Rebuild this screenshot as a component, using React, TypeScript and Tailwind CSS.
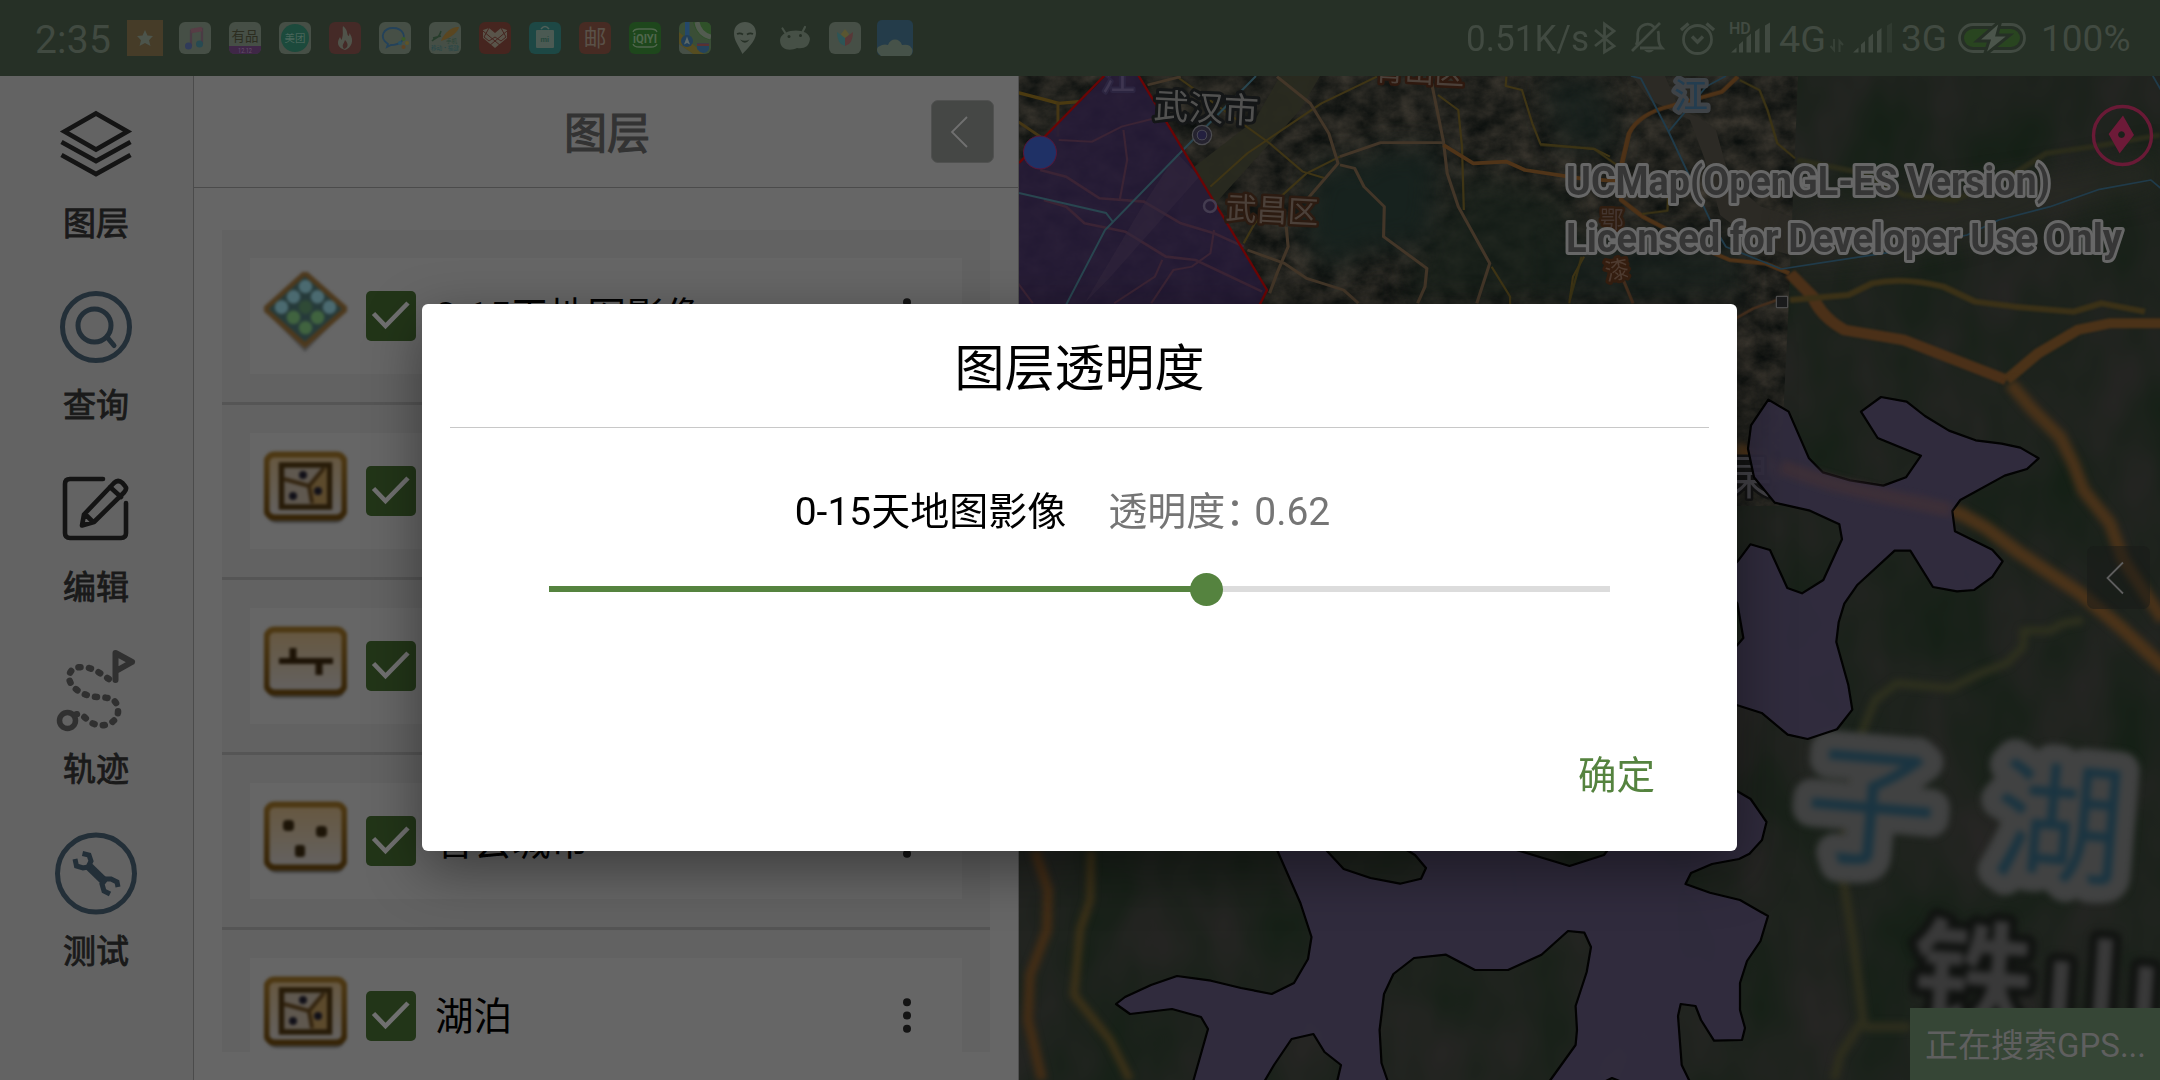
import React from "react";

const FONT = "font-['Roboto','Noto_Sans_CJK_SC',sans-serif]";

type GlyphKind = "raster" | "polygon" | "line" | "point";

const layers: { kind: GlyphKind; name: string }[] = [
  { kind: "raster", name: "0-15天地图影像" },
  { kind: "polygon", name: "" },
  { kind: "line", name: "" },
  { kind: "point", name: "省会城市" },
  { kind: "polygon", name: "湖泊" },
];

function LayerGlyph({ kind }: { kind: GlyphKind }) {
  if (kind === "raster") {
    const cells = [];
    for (let r = 0; r < 3; r++)
      for (let c = 0; c < 3; c++) {
        const x = 41.5 + (c - r) * 12;
        const y = 14.5 + (c + r) * 10.3;
        const fill = r === 1 && c === 1 ? "#2f4a36" : r + c < 3 ? "#4b6a70" : "#40633f";
        cells.push(<circle key={`${r}${c}`} cx={x} cy={y} r="6.8" fill={fill} />);
      }
    return (
      <svg className="h-[88px] w-[83px] shrink-0 blur-[1.6px]" viewBox="0 0 83 88">
        <path d="M41 6 L78 42 L41 80 L4 42Z" fill="#4a4a4a" />
        <path d="M41 1 L82 37 L41 73 L1 37Z" fill="#263a3a" stroke="#4d391d" strokeWidth="5" />
        {cells}
      </svg>
    );
  }
  return (
    <svg className="h-[88px] w-[83px] shrink-0 blur-[1.6px]" viewBox="0 0 83 88">
      <defs>
        <linearGradient id="plate" x1="0" y1="0" x2="0" y2="1">
          <stop offset="0" stopColor="#66573f" />
          <stop offset="1" stopColor="#636160" />
        </linearGradient>
        <linearGradient id="frame" x1="0" y1="0" x2="0" y2="1">
          <stop offset="0" stopColor="#4d3813" />
          <stop offset="1" stopColor="#362407" />
        </linearGradient>
      </defs>
      <rect x="3" y="12" width="78" height="64" rx="9" fill="#333" opacity="0.7" />
      <rect x="2.5" y="7.5" width="78" height="63" rx="8" fill="url(#plate)" stroke="url(#frame)" strokeWidth="6" />
      {kind === "polygon" && (
        <g>
          <rect x="17.5" y="18" width="48" height="42" fill="#5f584f" stroke="#271b08" strokeWidth="5.5" />
          <path d="M45 39 L60 21 L63 21 L63 57 L47 57Z" fill="#5c4a2c" />
          <path d="M20 32 L45 39 L60 21 M45 39 L48 56" fill="none" stroke="#33240f" strokeWidth="4" />
          <circle cx="39" cy="28" r="4" fill="#111018" />
          <circle cx="29" cy="49" r="4" fill="#111018" />
          <circle cx="54" cy="44" r="4" fill="#111018" />
        </g>
      )}
      {kind === "line" && (
        <g stroke="#1d1306">
          <path d="M15 39 H69" strokeWidth="6" />
          <path d="M29 26 V39 M55 39 V53" strokeWidth="7" />
        </g>
      )}
      {kind === "point" && (
        <g fill="#1d1508">
          <rect x="19" y="23" width="11" height="11" rx="4" />
          <rect x="52" y="29" width="11" height="11" rx="4" />
          <rect x="31" y="48" width="10" height="12" rx="3" />
        </g>
      )}
    </svg>
  );
}

function LayerRow({ kind, name }: { kind: GlyphKind; name: string }) {
  return (
    <div className="h-[175px] shrink-0 border-b-[3px] border-[#555] pt-7 pr-7 pb-7 pl-7">
      <div className="flex h-[116px] items-center bg-[#666] pl-3.5">
        <LayerGlyph kind={kind} />
        <div className="ml-[19px] flex size-[50px] shrink-0 items-center justify-center rounded-[5px] bg-[#223518]">
          <svg className="size-[50px]" viewBox="0 0 50 50">
            <path d="M7.5 22.5 L19.5 35 L42 12" fill="none" stroke="#707070" strokeWidth="4.6" />
          </svg>
        </div>
        <span className="ml-[19px] flex-1 pt-0.5 text-[38.500px] leading-[44px] whitespace-nowrap text-black">{name}</span>
        <svg className="mr-[50px] h-9 w-2.5" viewBox="0 0 10 36">
          <circle cx="5" cy="4.2" r="4" fill="#141414" />
          <circle cx="5" cy="17.5" r="4" fill="#141414" />
          <circle cx="5" cy="30.8" r="4" fill="#141414" />
        </svg>
      </div>
    </div>
  );
}

function SideItem({ label, children }: { label: string; children: React.ReactNode }) {
  return (
    <div className="flex h-[182px] flex-col items-center">
      <svg className="h-[90px] w-[90px]" viewBox="0 0 90 90" fill="none">
        {children}
      </svg>
      <span className="mt-[17px] text-[33px] leading-[36px] text-[#1a1a1a] [-webkit-text-stroke:0.9px_#1a1a1a]">
        {label}
      </span>
    </div>
  );
}

function Sidebar() {
  return (
    <nav className="flex w-[194px] shrink-0 flex-col border-r border-[#4b4b4b] bg-[#636363] pt-[23px] pr-px">
      <SideItem label="图层">
        <g stroke="#141414" strokeWidth="4.6">
          <path d="M45 14.5 L76.500 32.5 L45 50.500 L13.500 32.5Z" />
          <path d="M10.500 43 L45 62 L79.500 43" />
          <path d="M10.500 56 L45 75 L79.500 56" />
        </g>
      </SideItem>
      <SideItem label="查询">
        <g stroke="#232f38" strokeWidth="5">
          <circle cx="45" cy="46" r="33.5" />
          <circle cx="43.5" cy="44.5" r="16.5" />
          <path d="M56 56 L63 64.5" strokeLinecap="round" />
        </g>
      </SideItem>
      <SideItem label="编辑">
        <g stroke="#141414" strokeWidth="4.6" strokeLinecap="round" strokeLinejoin="round">
          <path d="M52 16 H19 Q14 16 14 21 V70 Q14 75 19 75 H70 Q75 75 75 70 V40" />
          <path d="M33 51.500 L63 20 Q67 16 71.500 20 L74 23 Q76.500 26 73 29.500 L43 59 L31 62.500Z M59 24 L70 34 M34 51 L42 59" />
        </g>
      </SideItem>
      <SideItem label="轨迹">
        <circle cx="16.500" cy="75.500" r="8" stroke="#303030" strokeWidth="5.5" />
        <path
          d="M24 70 C31 66 34 75 42 78.500 C55 84 68 76 67 65 C66 54 60 52.500 46 52 C30 51 18 41 18 32 C19 22 28 21 38 23 C48 26 54 32 61 36"
          stroke="#303030"
          strokeWidth="6.5"
          strokeLinecap="round"
          strokeDasharray="2 8.400"
        />
        <path d="M64.500 35 V8 L81 17 L65 26" stroke="#303030" strokeWidth="6" strokeLinejoin="round" strokeLinecap="round" />
      </SideItem>
      <SideItem label="测试">
        <circle cx="45" cy="46.500" r="38.500" stroke="#232f38" strokeWidth="5" />
        <g stroke="#232f38">
          <path d="M37 38.500 L54 55" strokeWidth="8.500" />
          <path d="M31.500 26.500 L38 28 L40 34 L37 40 L32 41 L25.500 39 L24 32" strokeWidth="5" />
          <path d="M59 67 L53 64 L51 57 L55 52 L60 52 L66 55 L67 60" strokeWidth="5" />
        </g>
      </SideItem>
    </nav>
  );
}

function LayerPanel() {
  return (
    <section className="flex w-[825px] shrink-0 flex-col border-r border-[#4e4e4e] bg-[#666]">
      <header className="flex h-28 shrink-0 items-center border-b border-[#4b4b4b] pr-6">
        <h2 className="flex-1 pt-1.5 pl-[89px] text-center text-[43px] leading-none text-[#333] [-webkit-text-stroke:1.2px_#333]">
          图层
        </h2>
        <div className="flex h-[63px] w-[63px] items-center justify-center rounded-[7px] border border-[#505150] bg-[#454745]">
          <svg className="mr-1.5 h-9 w-6" viewBox="0 0 24 36">
            <path d="M19 3 L4 18 L19 33" fill="none" stroke="#707070" strokeWidth="1.8" />
          </svg>
        </div>
      </header>
      <div className="mt-[42px] mb-7 ml-7 flex min-h-0 w-[768px] flex-1 flex-col overflow-hidden bg-[#626262]">
        {layers.map((l, i) => (
          <LayerRow key={i} kind={l.kind} name={l.name} />
        ))}
      </div>
    </section>
  );
}

function MapView() {
  const lake = "#322d40";
  return (
    <section className="relative min-w-0 flex-1 overflow-hidden bg-[#1c231d]">
      <svg className="block h-[1004px] w-[1141px]" viewBox="1019 76 1141 1004">
        <defs>
          <filter id="city" x="0" y="0" width="1" height="1" colorInterpolationFilters="sRGB">
            <feTurbulence type="fractalNoise" baseFrequency="0.045 0.06" numOctaves="5" seed="4" />
            <feColorMatrix values="0.24 0 0 0 0.015  0.2 0 0 0 0.035  0.17 0 0 0 0.032  0 0 0 0 1" />
          </filter>
          <filter id="rural" x="0" y="0" width="1" height="1" colorInterpolationFilters="sRGB">
            <feTurbulence type="fractalNoise" baseFrequency="0.014 0.009" numOctaves="3" seed="9" />
            <feColorMatrix values="0.1 0 0 0 0.065  0.03 0 0 0 0.12  0.08 0 0 0 0.072  0 0 0 0 1" />
          </filter>
          <filter id="soft" x="-20%" y="-20%" width="140%" height="140%" colorInterpolationFilters="sRGB">
            <feGaussianBlur stdDeviation="3" />
          </filter>
          <filter id="haze" x="-50%" y="-50%" width="200%" height="200%" colorInterpolationFilters="sRGB">
            <feGaussianBlur stdDeviation="14" />
          </filter>
          <clipPath id="west">
            <path d="M1019 76 H1798 L1788 320 L1760 870 L1019 870Z" />
          </clipPath>
        </defs>
        <rect x="1019" y="76" width="1141" height="1004" filter="url(#rural)" />
        <g clipPath="url(#west)">
          <rect x="1019" y="76" width="790" height="430" filter="url(#city)" />
          <g filter="url(#haze)">
            <path d="M1320 160 L1375 165 L1380 240 L1330 270 L1300 230Z" fill="#17221e" />
            <path d="M1370 150 L1440 150 L1430 240 L1375 250Z" fill="#17221e" />
            <path d="M1540 240 L1740 240 L1740 300 L1540 300Z" fill="#18211d" opacity="0.8" />
            <path d="M1470 170 L1570 200 L1560 300 L1400 300Z" fill="#172019" opacity="0.75" />
            <path d="M1540 76 L1600 76 L1620 150 L1560 150Z" fill="#17211d" opacity="0.8" />
          </g>
          <path d="M1280 76 L1255 120 L1190 170 L1180 215 L1205 215 L1250 165 L1300 110 L1320 76Z" fill="#292a20" opacity="0.95" />
          <path
            d="M1632 76 L1665 76 L1680 110 L1700 118 L1716 130 L1730 180 L1760 206 L1795 218 L1790 255 L1760 246 L1720 215 L1705 160 L1690 120 L1650 100Z"
            fill="#2c2a25"
          />
        </g>
        <path d="M1790 215 C1900 190 2030 190 2160 150 V190 C2040 210 1930 260 1790 262Z" fill="#2a2a25" opacity="0.8" filter="url(#haze)" />

        {/* Local roads around the city centre */}
        <g transform="translate(1018 70) scale(0.37 0.3333)" fill="none" strokeLinejoin="round">
          <g stroke="#3f3515" strokeWidth="6">
            <path d="M0 68 L60 85 L110 100 L165 95" stroke="#4b3a10" strokeWidth="10" />
            <path d="M0 155 L60 200 M108 95 V200" stroke="#453614" strokeWidth="8" />
            <path d="M430 20 L680 220 L770 305 L830 325" />
            <path d="M970 20 L820 100 L620 250 L520 350" />
            <path d="M870 260 L780 310 L700 390 L640 460 L610 520" />
            <path d="M1135 75 L1190 120 L1200 230 L1205 420" />
            <path d="M1320 20 L1318 48 L1362 60 L1390 160 L1412 222 L1560 238 L1600 260" />
            <path d="M1530 560 L1500 620 L1490 700 M1280 590 L1330 680 V720" />
          </g>
          <g stroke="#433628" strokeWidth="8.500">
            <path d="M350 45 L440 20 M700 20 L790 100 L840 190 L865 280 L780 390 M870 260 L980 218 L1150 218" />
            <path d="M1118 40 L1150 215 L1160 310 L1190 410 L1275 580 L1240 700" />
            <path d="M870 285 L910 295 L935 350 L990 410 L988 500 L1105 595 L1100 650 L1080 700" />
            <path d="M725 470 L730 530 L700 610 L680 670 M620 540 L720 580 L780 625 L880 660 L920 700" />
          </g>
          <path d="M1150 225 L1230 280 L1320 275 L1370 300 L1520 325 L1700 340" stroke="#503418" strokeWidth="11" />
        </g>

        {/* Ring road and highways */}
        <g transform="translate(1540 70) scale(0.3954 0.3333)" fill="none" strokeLinejoin="round">
          <path
            d="M500 20 L460 65 L400 85 L330 108 Q250 130 225 190 L205 290 V390 L260 440 L420 540 L480 570 L570 580 L630 610"
            stroke="#4e3217"
            strokeWidth="12"
          />
          <path d="M200 600 L235 700 M495 745 L540 715 L600 690" stroke="#452f1e" strokeWidth="8" />
          <path
            d="M505 30 L555 60 L575 120 L600 220 L645 265 M0 225 L135 235 L200 290 M105 560 L75 690 M325 350 L322 422 L258 432"
            stroke="#3c3415"
            strokeWidth="6"
          />
          <g filter="url(#soft)">
            <path d="M632 610 L690 680 Q710 740 770 780 L920 810 L1050 870 L1180 930" stroke="#4b3018" strokeWidth="32" />
            <path d="M1180 930 L1260 850 L1360 780 L1440 760 H1580" stroke="#4b3218" strokeWidth="30" />
            <path
              d="M632 690 L780 675 L840 640 Q920 620 1020 650 L1100 695 L1200 710 L1350 725 L1420 700 L1530 725"
              stroke="#3b3117"
              strokeWidth="18"
            />
            <path d="M650 270 L820 310 L920 375 L1050 390 L1200 310 L1280 250 L1400 230 L1568 195" stroke="#2b2c1b" strokeWidth="16" />
          </g>
          <g stroke="#203b4a" strokeWidth="5">
            <path d="M230 18 L255 25 L325 185 L430 450 L470 530 L610 597 L880 548 L1080 495 L1160 450 L1290 410 L1415 358 L1545 330 L1580 365" />
            <path d="M470 18 L420 50 L325 185 M1550 18 L1580 80" />
          </g>
        </g>
        <g transform="translate(1720 340) scale(0.3333)" fill="none" strokeLinejoin="round">
          <g className="blur-[9px]">
            <path d="M870 130 L930 200 L1020 290 L1060 370 L1090 450 L1170 550 L1210 660 L1330 840" stroke="#493219" strokeWidth="38" />
            <path
              d="M50 325 L180 390 L330 440 L480 470 L610 490 L720 520 L800 565 L900 640 L1080 760 L1200 860 L1340 990"
              stroke="#4b3319"
              strokeWidth="40"
            />
            <path
              d="M1090 840 L1030 850 L990 872 H910 V920 L860 970 L780 1000 L690 1045 L530 1030 L465 1080 L425 1180 V1260"
              stroke="#2e301e"
              strokeWidth="24"
            />
          </g>
        </g>
        <g filter="url(#soft)" fill="none">
          <path d="M1861 740 L1840 860 L1853 940 L1863 1020 L1840 1055 L1834 1080 M1863 1027 H1910" stroke="#2e2e1d" strokeWidth="9" />
          <path d="M1035 851 L1048 890 L1047 930 L1030 975 L1028 1020 L1042 1080" stroke="#432d16" strokeWidth="10" />
          <path d="M1091 851 L1090 900 L1080 930 L1074 995 L1110 1040 L1130 1080" stroke="#3d3218" strokeWidth="8" />
        </g>

        {/* Highlighted administrative area */}
        <path d="M1019 163 L1109 73 H1138 L1267 290 L1240 345 H1019Z" fill="#271b39" fillOpacity="0.85" />
        <g transform="translate(1018 70) scale(0.37 0.3333)" fill="none" stroke="#3b2435" strokeWidth="8">
          <path d="M60 300 L130 320 L220 385 L340 395 L440 460 L530 490 L610 530" />
          <path d="M70 390 L130 410 L180 460 L290 485 L400 560 L480 570 L660 665" />
          <path
            d="M530 480 L520 550 L470 590 L420 600 L360 700 M390 570 L370 620 L260 700 M285 180 L295 270 L275 390 M110 210 L200 215 L280 170 L370 145 M0 640 L40 700"
            strokeWidth="6"
          />
          <path d="M430 250 L490 320 L250 620 L180 700 L330 420Z" fill="#33273d" stroke="none" opacity="0.5" />
        </g>
        <path d="M1019 193 L1106 213 L1113 222 L1182 151 L1256 76 M1113 222 L1105 230 L1066 305" fill="none" stroke="#294650" strokeWidth="2" />
        <path d="M1019 163 L1107 73 M1137 73 L1267 290 L1240 345" fill="none" stroke="#6b0505" strokeWidth="2.4" />
        <circle cx="1040" cy="152.500" r="16.500" fill="#1f3166" stroke="#5b1636" strokeWidth="1" />

        {/* Place names */}
        <g className="font-['Noto_Sans_CJK_SC',sans-serif]" paintOrder="stroke" strokeLinejoin="round">
          <text x="1101" y="90" fontSize="34" fill="#3e3650" stroke="#2c2540" strokeWidth="4">江</text>
          <text x="1153" y="118" fontSize="35" fill="#515150" stroke="#141617" strokeWidth="6" transform="rotate(3 1153 118)">武汉市</text>
          <circle cx="1202" cy="135" r="9" fill="#25232f" stroke="#4c4c50" strokeWidth="2.500" />
          <circle cx="1202" cy="135" r="4.500" fill="#23203f" stroke="#55555d" strokeWidth="1.500" />
          <circle cx="1210" cy="206" r="6" fill="none" stroke="#443c50" strokeWidth="2.500" />
          <text x="1225" y="219" fontSize="31" fill="#4b4039" stroke="#2c1b11" strokeWidth="5" transform="rotate(3 1225 219)">武昌区</text>
          <text x="1374" y="80" fontSize="30" fill="#4b4039" stroke="#2f190f" strokeWidth="5" transform="rotate(3 1374 80)">青山区</text>
          <text x="1674" y="108" fontSize="34" fill="#233d50" stroke="#3f4347" strokeWidth="8">江</text>
          <text x="1600" y="228" fontSize="24" fill="#43352f" stroke="#301d10" strokeWidth="5">鄂</text>
          <text x="1607" y="281" fontSize="24" fill="#4f3c31" stroke="#351e10" strokeWidth="6" transform="rotate(-12 1607 281)">漆</text>
          <text x="1726" y="494" fontSize="46" fill="#424146" stroke="#131313" strokeWidth="5">杲</text>
          <rect x="1777" y="297" width="10" height="10" fill="#1b1c1d" stroke="#4d4d4d" strokeWidth="2.500" />
        </g>
        <g className="font-['Noto_Sans_CJK_SC',sans-serif]" strokeLinejoin="round" paintOrder="stroke" filter="url(#soft)">
          <g transform="rotate(5 1800 850)" fontSize="132" fill="#1a3441" stroke="#414242" strokeWidth="38">
            <text x="1801" y="849">子</text>
            <text x="1990" y="849">湖</text>
          </g>
          <g transform="rotate(4 1910 1030)" fontSize="122" fontWeight="700" fill="#393939" stroke="#101210" strokeWidth="16">
            <text x="1908" y="1018">铁</text>
            <text x="2038" y="1028">山</text>
          </g>
        </g>

        {/* Lakes */}
        <g stroke="#020202" strokeWidth="2.2" strokeLinejoin="round" fill={lake} fillOpacity="0.92">
          <path
            vectorEffect="non-scaling-stroke"
            transform="translate(1720 340) scale(0.3333)"
            d="M0 720 L53 664 L91 613 L150 630 L202 744 L246 760 L310 720 L366 598 L358 553 L270 512 L164 488 L102 412 L84 326 L93 256 L145 179 L206 215 L267 355 L308 397 L390 421 L490 437 L558 412 L603 347 L473 294 L423 215 L483 171 L560 185 L615 228 L687 272 L767 301 L845 311 L901 323 L956 355 L921 387 L854 407 L721 480 L697 513 L705 574 L817 629 L848 664 L817 711 L763 750 L711 754 L639 741 L571 632 H524 L411 736 L373 791 L356 847 L349 906 L385 1035 L397 1109 L351 1168 L263 1197 L203 1184 L125 1119 L52 1096 L0 1080 L0 970 L52 915 L70 894 L52 790Z"
          />
          <path
            fillRule="evenodd"
            d="M1270 830 L1277.500 851 L1300.400 903 L1311.500 937 L1308 959 L1294 983 L1271.700 994 L1241 988 L1211 980.700 L1177 976 L1151 985 L1125 997 L1116 1004 L1130 1014 L1172 1009 L1201 1017 L1208 1029 L1193 1082 H1264 L1274 1065 L1291.600 1039 L1313.400 1034 L1324.500 1052 L1341 1065 L1337 1082 H1388 L1381.500 1063 L1379.600 1030 L1384 994 L1393.400 974 L1414 958 L1446 954.700 L1475 970 H1508 L1541.500 954.700 L1568 931 L1584.400 932.700 L1591 947 L1586.700 972 L1575.600 1006 L1577 1030 L1575.600 1045 L1549 1082 H1690 L1681.700 1065 L1678 1016 L1680.700 1004 L1695.500 1006 L1701 1020 L1714 1040.700 L1742 1040 L1745 1028 L1740 1010 V983 L1747 961 L1760.500 941 L1768 916 L1740 900 L1710 892.700 L1685.500 884 L1691 873 L1712 864 L1739 859 L1749.500 853.700 L1762 840 L1766.500 822 L1750.600 799 L1737 791 L1700 780 V830Z M1320 840 L1327 851 L1343.700 869 L1370.500 878 L1400 883.700 L1421 878.700 L1426 868 L1415 855 L1400 846Z M1500 845 L1569.500 866 L1604 855 L1615 840Z"
          />
          <path d="M1604 1082 L1612 1078 L1622 1082" fill="#1a201c" />
        </g>
        <path d="M1782 466 C1830 485 1880 495 1950 510" stroke="#403037" strokeWidth="14" opacity="0.75" fill="none" filter="url(#soft)" />

        {/* Licence watermark */}
        <g
          className="font-['Roboto',sans-serif]"
          fontSize="40"
          fontWeight="700"
          fill="#363636"
          stroke="#676767"
          strokeWidth="6"
          paintOrder="stroke"
          strokeLinejoin="round"
        >
          <text x="1566" y="195" textLength="484" lengthAdjust="spacingAndGlyphs">UCMap(OpenGL-ES Version)</text>
          <text x="1566" y="252" textLength="556" lengthAdjust="spacingAndGlyphs">Licensed for Developer Use Only</text>
        </g>

        <circle cx="2122.500" cy="135.500" r="29" fill="none" stroke="#691a36" strokeWidth="3.400" />
        <path
          fillRule="evenodd"
          fill="#6d1a38"
          d="M2123 115.500 L2134 135 L2119.600 153.500 L2108.600 134Z M2121.500 131.200 a3.400 3.400 0 1 0 0.010 0Z"
        />
      </svg>
      <div className="absolute top-[470px] right-2.5 flex size-[63px] items-center justify-center rounded-[7px] bg-[#171917]/50">
        <svg className="mr-1.5 h-9 w-6" viewBox="0 0 24 36">
          <path d="M19 2.500 L3.500 18 L19 33.500" fill="none" stroke="#5e5e5e" strokeWidth="1.8" />
        </svg>
      </div>
      <div className="absolute right-0 bottom-0 flex h-[72px] w-[250px] items-center bg-[#364636] pt-0.5 pl-[15px] text-[33px] leading-none whitespace-nowrap text-[#5f5f5f]">
        正在搜索GPS...
      </div>
    </section>
  );
}

function AppTile({ fill, children }: { fill: string; children?: React.ReactNode }) {
  return (
    <svg className="size-8 shrink-0" viewBox="0 0 32 32">
      <rect width="32" height="32" rx="6" fill={fill} />
      {children}
    </svg>
  );
}

function SignalBars({ last }: { last: string }) {
  return (
    <g fill="#414a41">
      <path d="M0 30 L5.500 25 V30Z M8 30 V22 L12 18.500 V30Z M15.500 30 V15 L20 11 V30Z M24 30 V9 L28.500 5.500 V30Z" />
      <path d="M34 30 V3 L39 0 V30Z" fill={last} />
    </g>
  );
}

function StatusBar() {
  const cjk = "font-['Noto_Sans_CJK_SC',sans-serif]";
  return (
    <header className="flex h-[76px] shrink-0 items-center bg-[#263026] pl-[35px] text-[#414a41]">
      <span className="w-[92px] pt-1 text-[39px] leading-[44px] tracking-[0.2px]">2:35</span>
      <div className="flex items-center gap-[18px]">
        <svg className="-mr-0.5 size-9 shrink-0" viewBox="0 0 36 36">
          <rect width="36" height="36" fill="#463c28" />
          <path d="M18 10 L20.500 15.500 L26 16 L22 20.300 L23.500 26 L18 23 L12.500 26 L14 20.300 L10 16 L15.500 15.500Z" fill="#4c544b" />
        </svg>
        <AppTile fill="#464f46">
          <path d="M12 24 V9 L23 7 V22" fill="none" stroke="#4a3b44" strokeWidth="2.200" />
          <path d="M12 9 L23 7" stroke="#573d45" strokeWidth="4.500" />
          <circle cx="9.500" cy="24" r="3.500" fill="#303b5a" />
          <circle cx="20.500" cy="22" r="3.500" fill="#274a52" />
        </AppTile>
        <AppTile fill="#464f46">
          <text x="2.500" y="18.500" fontSize="13.500" className={cjk} fill="#2c2d20">有品</text>
          <path d="M0 24 H32 V26 Q32 32 26 32 H6 Q0 32 0 26Z" fill="#3f2747" />
          <text x="9" y="31" fontSize="8" textLength="14" lengthAdjust="spacingAndGlyphs" fill="#66506c">12.12</text>
        </AppTile>
        <AppTile fill="#464f46">
          <circle cx="16" cy="16" r="14" fill="#1c4a3c" />
          <text x="5.500" y="20" fontSize="10.500" className={cjk} fill="#4a665b">美团</text>
        </AppTile>
        <AppTile fill="#452a27">
          <path
            d="M14 4 C20 9 17 13 20 14 L20.500 11 C26 19 22 26 16 28 C9 26 7 21 11 15 L12.500 18 C15 12 13 8 14 4Z M15 27 C12 23 15 22 16 18 C20 22 19 26 15 27Z"
            fill="#50534a"
            fillRule="evenodd"
          />
        </AppTile>
        <AppTile fill="#464f46">
          <path d="M8 25 L9 22 C-1 15 5 6 14 6 C24 6 28 15 22 20 Q18 23 12 23Z" fill="none" stroke="#24425a" strokeWidth="1.800" />
          <circle cx="24.500" cy="17" r="2" fill="#3a5a28" />
          <circle cx="21" cy="21" r="2" fill="#275063" />
          <circle cx="28" cy="21" r="2" fill="#5e5428" />
          <circle cx="24.500" cy="25" r="2" fill="#5e4324" />
        </AppTile>
        <AppTile fill="#464f46">
          <path d="M12 19 C15 10 24 4 30 5 C29 10 22 16 12 19Z" fill="#5a4620" />
          <path d="M3 19 C7 15 10 17 12 9 M4 16 L12 14" fill="none" stroke="#273d2c" strokeWidth="1.500" />
          <text x="17" y="21" fontSize="5.500" className={cjk} fill="#2a4436">手机</text>
          <text x="2" y="28" fontSize="5.600" className={cjk} fill="#244648">移动·福建</text>
        </AppTile>
        <AppTile fill="#46251f">
          <path d="M4 8 L10 6 L16 11 L22 6 L28 8 L28 16 L16 26 L4 16Z" fill="#59544a" />
          <path d="M4 9 L22 24 M28 9 L10 24 M10 6 L5 15 L10 19 M22 6 L27 15 L22 19 M10 19 L16 15 L22 19" stroke="#46251f" fill="none" />
        </AppTile>
        <AppTile fill="#1d4845">
          <path d="M12 7 Q16 2 20 7" stroke="#506059" fill="none" strokeWidth="1.500" />
          <rect x="7" y="8" width="18" height="18" rx="1" fill="#4b5a53" />
          <text x="11.500" y="20" fontSize="7.500" fontWeight="700" fill="#26473c">mi</text>
        </AppTile>
        <AppTile fill="#472b23">
          <text x="4.500" y="24" fontSize="23" className={cjk} fill="#5a5148">邮</text>
        </AppTile>
        <AppTile fill="#1e471c">
          <path
            d="M4 10 Q5 7 10 7 H22 Q27 7 28 10 M4 22 Q5 25 10 25 H22 Q27 25 28 22"
            fill="none"
            stroke="#50664d"
            strokeWidth="1.300"
          />
          <text x="4" y="20.500" fontSize="12.500" fontWeight="700" textLength="24" lengthAdjust="spacingAndGlyphs" fill="#50664d">
            iQIYI
          </text>
        </AppTile>
        <AppTile fill="#3a4e36">
          <path d="M14 0 H26 Q32 0 32 6 V18 Q18 16 14 0Z" fill="#2f5129" />
          <path d="M18 0 Q20 12 32 15" stroke="#525b50" strokeWidth="5" fill="none" />
          <path d="M0 10 L25 32 H14 L0 22Z" fill="#564d20" />
          <path d="M0 22 L14 32 H6 Q0 32 0 26Z" fill="#464f46" />
          <rect x="6" y="0" width="4.500" height="14" fill="#24486a" />
          <circle cx="8" cy="19" r="6" fill="#223f58" />
          <path d="M8 14.500 L11 22.500 L8 21 L5 22.500Z" fill="#5b6868" />
          <path d="M18 21 H30 V27 Q28 31 24 31 Q20 30 18 27Z" fill="#24435c" />
          <rect x="18" y="21.500" width="12" height="2.500" fill="#5a3131" />
        </AppTile>
        <svg className="size-8 shrink-0" viewBox="0 0 32 32">
          <path d="M13.500 32 C10 24 5 19 5 11.500 C5 4 10 0 16 0 C22 0 27 4 27 11.500 C27 19 17 28 13.500 32Z" fill="#4d564d" />
          <path d="M8 12 Q11 10.500 14 12.500 M18 12.500 Q21 10.500 24 12" stroke="#263026" strokeWidth="1.700" fill="none" />
          <path d="M11 17.500 Q16 20 20.500 17.500 Q16 24 11 17.500Z" fill="#263026" />
        </svg>
        <svg className="size-8 shrink-0" viewBox="0 0 32 32">
          <path d="M3.500 6.500 L7 12 M26 5 L23.500 10" stroke="#465046" strokeWidth="2.200" strokeLinecap="round" />
          <path d="M1 18 C2 6 30 5 31 17 C30 25 25 27 18 26 C12 29 1 29 1 18Z" fill="#465046" />
          <circle cx="10" cy="14.500" r="1.500" fill="#263026" />
          <circle cx="21.500" cy="13.500" r="1.500" fill="#263026" />
        </svg>
        <AppTile fill="#464f46">
          <path d="M16 7 L20 12 L16 22 L12 12Z" fill="#5a5631" />
          <path d="M8 10 L16 16 V24 Q8 22 8 10Z" fill="#2d5557" />
          <path d="M24 10 L16 16 V24 Q24 22 24 10Z" fill="#583838" />
        </AppTile>
        <svg className="-ml-0.5 size-9 shrink-0" viewBox="0 0 36 36">
          <rect width="36" height="36" rx="5" fill="#243c4a" />
          <path d="M5 25 Q8 24 11 25 Q13 19.500 18 19.500 Q23 19.500 25 25 Q30 24 33 26 Q38 31 33 36 H4 Q-2 31 1 27Z" fill="#465249" />
        </svg>
      </div>

      <div className="ml-auto flex items-center pr-7">
        <span className="w-[130px] pt-0.5 text-[37px] leading-[44px] whitespace-nowrap">
          <span className="inline-block origin-left scale-x-[0.95]">0.51K/s</span>
        </span>
        <svg className="-ml-0.5 h-[36px] w-[255px] shrink-0 overflow-visible" viewBox="0 0 255 36" fill="none" stroke="#414a41" strokeWidth="2.800">
          <path d="M1 10 L20 26 L10.500 32 V4 L20 11 L1 26" />
          <path d="M42 25 C45 21 43 16 44 12 C46 4 55 2 60 7 M64 11 C66 16 62 22 68 28 H46 M66 3 L38 31" />
          <path d="M50 30 H60 Q55 35 50 30Z" fill="#414a41" stroke="none" />
          <circle cx="103.500" cy="19.500" r="14" />
          <path d="M98 16.500 L103.500 22 L109 16.500 M87 10 L94.500 3.500 M120 10 L112.500 3.500" strokeWidth="3.400" />
          <text x="135" y="14" fontSize="16" fontWeight="600" fill="#414a41" stroke="none">HD</text>
          <g transform="translate(137 2.500)" stroke="none">
            <SignalBars last="#414a41" />
          </g>
          <text x="185" y="32" fontSize="37" fill="#414a41" stroke="none" textLength="47" lengthAdjust="spacingAndGlyphs">4G</text>
          <path d="M240 19 V30 L236.500 26 M245.500 32 V21 L249 25" strokeWidth="2" stroke="#364036" />
        </svg>
        <svg className="ml-1 h-[36px] w-[41px]" viewBox="0 0 41 36">
          <g transform="translate(0 2.500)">
            <SignalBars last="#303a30" />
          </g>
        </svg>
        <span className="ml-[7px] w-[57px] pt-0.5 text-[37px] leading-[44px]">3G</span>
        <svg className="h-[30px] w-[68px]" viewBox="0 0 68 30">
          <rect x="1.500" y="1.500" width="65" height="27" rx="13.500" fill="none" stroke="#414a41" strokeWidth="2.800" />
          <rect x="6" y="6" width="56" height="18" rx="9" fill="#294520" />
          <path d="M43 -3 L19 18 H31 L26 33 L52 12 H39Z" fill="#4b554b" stroke="#263026" strokeWidth="3" />
        </svg>
        <span className="ml-[15px] w-[91px] pt-0.5 text-[37px] leading-[44px] whitespace-nowrap">100%</span>
      </div>
    </header>
  );
}

function OpacityDialog() {
  const value = 0.62;
  return (
    <div className="absolute inset-x-0 top-[304px] flex justify-center pr-px">
      <div className="flex h-[547px] w-[1315px] flex-col rounded-[6px] bg-white px-7 shadow-[0_18px_56px_rgba(0,0,0,0.42)]">
        <h1 className="flex h-[124px] items-center justify-center border-b border-[#c8c8c8] pt-1.5 text-[50px] leading-[60px] text-black">
          图层透明度
        </h1>
        <div className="mt-[62px] flex justify-center gap-[42px] pr-[34px] text-[39px] leading-[44px]">
          <span className="text-black">0-15天地图影像</span>
          <span className="flex text-[#757575]">
            透明度
            <span className="w-[29px]">：</span>
            {value}
          </span>
        </div>
        <div className="mx-auto mt-[35px] flex h-[40px] w-[1061px] items-center">
          <div className="h-[6px] bg-[#55833f]" style={{ width: `${value * 100}%` }} />
          <div className="relative z-10 -mx-[16.500px] size-[33px] shrink-0 rounded-full bg-[#55833f]" />
          <div className="h-[6px] flex-1 bg-[#dcdcdc]" />
        </div>
        <button className="mt-auto mr-[54px] mb-[54px] self-end text-[38.500px] leading-[42px] text-[#55833f]">确定</button>
      </div>
    </div>
  );
}

export default function App() {
  return (
    <div className={`relative flex h-[1080px] w-[2160px] flex-col overflow-hidden bg-[#666] ${FONT}`}>
      <StatusBar />
      <main className="flex min-h-0 flex-1">
        <Sidebar />
        <LayerPanel />
        <MapView />
      </main>
      <OpacityDialog />
    </div>
  );
}
